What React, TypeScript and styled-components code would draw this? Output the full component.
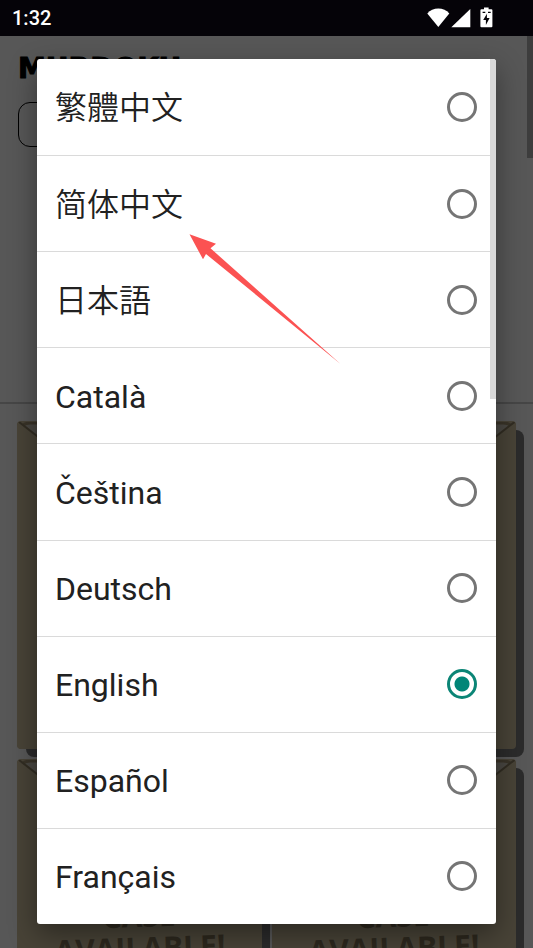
import { useState } from "react";
import styled, { createGlobalStyle } from "styled-components";

const languages = [
  { code: "zh-TW", name: "繁體中文", cjk: true },
  { code: "zh-CN", name: "简体中文", cjk: true },
  { code: "ja", name: "日本語", cjk: true },
  { code: "ca", name: "Català" },
  { code: "cs", name: "Čeština" },
  { code: "de", name: "Deutsch" },
  { code: "en", name: "English" },
  { code: "es", name: "Español" },
  { code: "fr", name: "Français" }
];

const cases = [1, 2, 3, 4];

const StatusIcons = () => (
  <svg width="66" height="22" viewBox="0 1 66 22" fill="#fff" aria-hidden="true">
    <path d="M0.3 7.6C3 4.4 7 2.600 11.3 2.600S19.600 4.4 22.300 7.600L11.300 21Z" />
    <path d="M43.300 3V21.200H24.300Z" />
    <path d="M57 1.500h4.600v1.700h2.800q1 0 1 1v16q0 1-1 1h-10q-1 0-1-1v-16q0-1 1-1H57Z" />
    <path
      d="M60.200 7.300l-4 6.800h2.700v4.800l3.700-6.800h-2.700V7.300Z M55.600 5.800h2.700v1.300h-2.700Z M61 5.800h2.700v1.300H61Z"
      fill="#050308"
    />
  </svg>
);

const Flap = () => (
  <FlapDrawing viewBox="0 0 240 110" preserveAspectRatio="none" aria-hidden="true">
    <path d="M4 1Q7 3 9 1H231Q233 3 236 1L120 94Z" fill="#d6d0c2" stroke="none" />
    <path d="M5 3Q8 1 12 1H228Q232 1 235 3" stroke="#a89776" strokeWidth="3" />
    <path d="M1 0L120 94L239 0" />
  </FlapDrawing>
);

const App = () => {
  const [language, setLanguage] = useState("en");

  return (
    <Screen>
      <GlobalStyle />
      <StatusBar>
        <Clock>1:32</Clock>
        <StatusIcons />
      </StatusBar>
      <Content>
        <Page>
          <Header>
            <Brand>
              <Logo>MURDOKU</Logo>
              <Byline>by Manuel Garand</Byline>
            </Brand>
            <LanguageButton type="button" aria-label="Language" />
          </Header>
          <Cases>
            {cases.map((item) => (
              <Envelope key={item}>
                <Flap />
                {item > 2 && (
                  <Stamp>
                    CASE
                    <br />
                    AVAILABLE!
                  </Stamp>
                )}
              </Envelope>
            ))}
          </Cases>
        </Page>
        <PageScrollbar />
        <Backdrop>
          <Dialog role="dialog" aria-label="Language">
            {languages.map(({ code, name, cjk }) => (
              <Option key={code} lang={code}>
                <Name $cjk={cjk}>{name}</Name>
                <Radio
                  type="radio"
                  name="language"
                  value={code}
                  checked={language === code}
                  onChange={() => setLanguage(code)}
                />
              </Option>
            ))}
            <ListScrollbar />
            <Arrow width="152" height="130" viewBox="0 0 152 130" aria-hidden="true">
              <path
                d="M0.500 0.300L27 9.700L21.500 14.300L151.500 129.900L17 20L14 25.300Z"
                fill="#fb5252"
              />
            </Arrow>
          </Dialog>
        </Backdrop>
      </Content>
    </Screen>
  );
};

const GlobalStyle = createGlobalStyle`
  * {
    box-sizing: border-box;
  }
  body {
    margin: 0;
    font-family: Roboto, "Noto Sans CJK SC", sans-serif;
    color: #212121;
  }
`;

const Screen = styled.div`
  display: flex;
  flex-direction: column;
  height: 100vh;
  overflow: hidden;
`;

const StatusBar = styled.div`
  display: flex;
  align-items: center;
  justify-content: space-between;
  height: 36px;
  flex-shrink: 0;
  padding: 0 40px 0 12px;
  background-color: #050308;
  color: white;
`;

const Clock = styled.time`
  font-size: 20px;
  font-weight: 500;
`;

const Content = styled.div`
  position: relative;
  flex: 1;
  min-height: 0;
  overflow: hidden;
`;

const Page = styled.main`
  background-color: #fff;
`;

const Header = styled.header`
  height: 368px;
  padding: 16px 18px;
  border-bottom: 2px solid #ccc;
`;

const Brand = styled.div`
  display: flex;
  align-items: center;
  gap: 10px;
  height: 32px;
  color: black;
`;

const Logo = styled.span`
  font-family: "DejaVu Sans", sans-serif;
  font-size: 28px;
  font-weight: 700;
  -webkit-text-stroke: 1px black;
`;

const Byline = styled.span`
  font-size: 20px;
  font-weight: 300;
`;

const LanguageButton = styled.button`
  display: block;
  width: 50%;
  height: 45px;
  margin-top: 18px;
  border: 1px solid black;
  border-radius: 12px;
  background: none;
`;

const Cases = styled.section`
  display: grid;
  grid-template-columns: 1fr 1fr;
  gap: 10px;
  padding: 17px 17px 0;
`;

const Envelope = styled.article`
  position: relative;
  isolation: isolate;
  display: flex;
  align-items: center;
  justify-content: center;
  height: 328px;
  padding-top: 18px;
  border: 1px solid #c3b593;
  border-radius: 4px;
  background-color: #d2c3a0;
  &::before,
  &::after {
    content: "";
    position: absolute;
    inset: -1px;
    z-index: -1;
    border-radius: 4px;
    background-color: #d2c3a0;
  }
  &::after {
    inset: 8px -9px -9px 8px;
    z-index: -2;
    border-radius: 8px;
    background-color: #7e7e7e;
  }
`;

const FlapDrawing = styled.svg`
  position: absolute;
  top: 0;
  left: 0;
  width: 100%;
  height: 110px;
  fill: none;
  stroke: #8f8265;
  stroke-width: 2;
`;

const Stamp = styled.p`
  margin: 0;
  color: #84775a;
  font-family: "Open Sans", sans-serif;
  font-size: 30px;
  font-weight: 700;
  line-height: 32px;
  text-align: center;
  transform: rotate(-2deg);
`;

const PageScrollbar = styled.div`
  position: absolute;
  top: 0;
  right: 0;
  width: 6px;
  height: 122px;
  background-color: #b4b4b4;
`;

const Backdrop = styled.div`
  position: absolute;
  inset: 0;
  display: flex;
  padding: 23px 37px 24px;
  background-color: rgba(0, 0, 0, 0.66);
`;

const Dialog = styled.div`
  position: relative;
  display: grid;
  grid-auto-rows: 1fr;
  width: 100%;
  border-radius: 3px;
  background-color: white;
  box-shadow: 0 10px 28px rgba(0, 0, 0, 0.4);
`;

const Option = styled.label`
  display: flex;
  align-items: center;
  justify-content: space-between;
  padding: 0 19px 0 18px;
  cursor: pointer;
  & + & {
    border-top: 1px solid #dadada;
  }
`;

const Name = styled.span<{ $cjk?: boolean }>`
  padding-top: 2px;
  font-size: 32px;
  line-height: 48px;
  font-weight: ${({ $cjk }) => ($cjk ? 350 : 400)};
`;

const Radio = styled.input`
  appearance: none;
  flex-shrink: 0;
  width: 30px;
  height: 30px;
  margin: 0;
  border: 3px solid #757575;
  border-radius: 50%;
  &:checked {
    border-color: #0b8576;
    background: radial-gradient(circle, #018577 7px, transparent 8px);
  }
`;

const ListScrollbar = styled.div`
  position: absolute;
  top: 0;
  right: 0;
  width: 6px;
  height: 340px;
  border-top-right-radius: 3px;
  background-color: #d9d9d9;
`;

const Arrow = styled.svg`
  position: absolute;
  top: 175px;
  left: 152px;
  pointer-events: none;
`;

export default App;
